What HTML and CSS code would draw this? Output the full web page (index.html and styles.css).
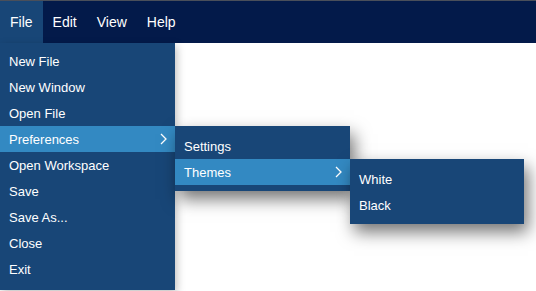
FILE: index.html
```html
<!DOCTYPE html>
<html lang="en">
<head>
  <meta charset="UTF-8">
  <title>Menu</title>
  <link rel="stylesheet" href="styles.css">
</head>
<body>

<nav class="menubar">
  <ul class="menubar-list">
    <li class="menubar-item open">
      <span class="menubar-label">File</span>
      <ul class="menu">
        <li class="menu-item">New File</li>
        <li class="menu-item">New Window</li>
        <li class="menu-item">Open File</li>
        <li class="menu-item active">
          <span>Preferences</span>
          <svg class="chevron" width="7" height="12" viewBox="0 0 7 12"><polyline points="1,1 6,6 1,11" fill="none" stroke="#fff" stroke-width="1.3"/></svg>
          <ul class="menu submenu">
            <li class="menu-item">Settings</li>
            <li class="menu-item active">
              <span>Themes</span>
              <svg class="chevron" width="7" height="12" viewBox="0 0 7 12"><polyline points="1,1 6,6 1,11" fill="none" stroke="#fff" stroke-width="1.3"/></svg>
              <ul class="menu submenu last">
                <li class="menu-item">White</li>
                <li class="menu-item">Black</li>
              </ul>
            </li>
          </ul>
        </li>
        <li class="menu-item">Open Workspace</li>
        <li class="menu-item">Save</li>
        <li class="menu-item">Save As...</li>
        <li class="menu-item">Close</li>
        <li class="menu-item">Exit</li>
      </ul>
    </li>
    <li class="menubar-item"><span class="menubar-label">Edit</span></li>
    <li class="menubar-item"><span class="menubar-label">View</span></li>
    <li class="menubar-item"><span class="menubar-label">Help</span></li>
  </ul>
</nav>

</body>
</html>
```

FILE: styles.css
```css
html, body {
    height: 100%;
}
body {
    margin: 0;
    background: #fff;
    font-family: 'Liberation Sans', Arial, sans-serif;
    font-size: 14px;
    color: #fff;
}
ul {
    list-style: none;
    margin: 0;
    padding: 0;
}
.menubar {
    position: relative;
    z-index: 10;
    background: #031a4a;
    border-top: 1px solid #4a4f5a;
}
.menubar-list {
    display: flex;
    height: 42px;
}
.menubar-item {
    position: relative;
    line-height: 42px;
    padding: 0 10px;
    cursor: default;
}
.menubar-item.open {
    background: #184677;
}
.menu {
    position: absolute;
    z-index: 20;
    top: 42px;
    left: 0;
    width: 175px;
    padding: 5px 0 8px;
    background: #184677;
    line-height: normal;
    box-shadow: 2px 3px 8px rgba(0, 0, 0, 0.25);
}
.menu-item {
    position: relative;
    display: flex;
    align-items: center;
    justify-content: space-between;
    height: 26px;
    padding: 0 8px 0 9px;
    font-size: 13px;
}
.menu-item.active {
    background: #3389c2;
}
.submenu {
    top: 0;
    left: 100%;
    padding: 7px 0 6px;
    box-shadow: 4px 8px 16px rgba(0, 0, 0, 0.55);
}
.submenu.last {
    width: 174px;
    padding-bottom: 6px;
}
```
